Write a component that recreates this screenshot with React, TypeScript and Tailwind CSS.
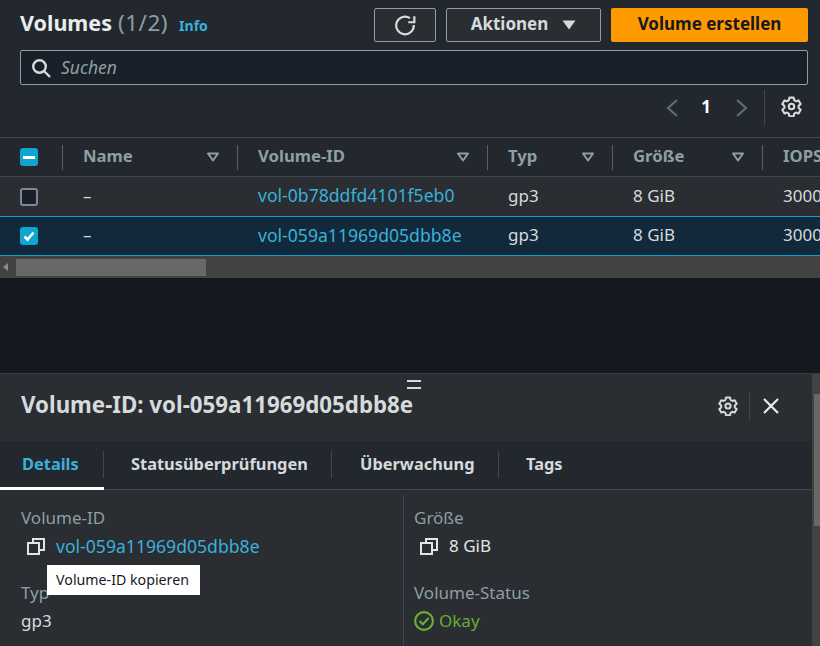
import React from "react";

function Gear({ size }: { size: number }) {
  return (
    <svg width={size} height={size} viewBox="0 0 20 20" fill="none" stroke="#d5dbdb" strokeWidth="2" strokeLinejoin="round" className="block shrink-0">
      <path d="M8 1.500h4l.6 2.500 1.700 1 2.400-.8 2 3.500-1.900 1.700v2l1.900 1.700-2 3.500-2.400-.8-1.700 1-.6 2.500H8l-.6-2.500-1.700-1-2.400.8-2-3.500 1.900-1.700v-2L1.300 7.700l2-3.500 2.400.8 1.700-1z" />
      <circle cx="10" cy="10" r="2.600" />
    </svg>
  );
}

function FilterCaret() {
  return (
    <svg width="14" height="12" viewBox="0 0 14 12" className="block">
      <path d="M2 2.500h10L7 9.500z" fill="none" stroke="#8d9fa3" strokeWidth="2" strokeLinejoin="round" />
    </svg>
  );
}

function Copy() {
  return (
    <svg width="18" height="18" viewBox="0 0 18 18" fill="none" stroke="#e1e5e5" strokeWidth="2" className="block">
      <rect x="1" y="6" width="11" height="11" />
      <path d="M6 5.500V2h11v11h-4" />
    </svg>
  );
}

function HeaderCell({ label, caret = true, last = false }: { label: string; caret?: boolean; last?: boolean }) {
  return (
    <div className={`flex items-center justify-between pl-[20px] ${last ? "" : "pr-[17px] border-r border-[#596067]"} h-[25px] whitespace-nowrap`}>
      <span className="text-[16.7px] font-bold text-[#8d9fa3] pb-[2px]">{label}</span>
      {caret && <FilterCaret />}
    </div>
  );
}

function Row({ id, selected }: { id: string; selected: boolean }) {
  return (
    <div
      className={`grid grid-cols-[63px_175px_250px_125px_150px_1fr] items-center text-[17px] whitespace-nowrap text-[#d5dbdb] ${
        selected ? "bg-[#12293c] border-y border-[#0f9fcf] h-[40px]" : "bg-[#2a2d32] h-[39px]"
      }`}
    >
      <div className="pl-[20px]">
        {selected ? (
          <div className="w-[18px] h-[18px] rounded-[3px] bg-[#0ea5d0] flex items-center justify-center">
            <svg width="14" height="14" viewBox="0 0 14 14" fill="none" stroke="#fff" strokeWidth="2.600">
              <path d="M2.500 7.500l3 3 6-7" />
            </svg>
          </div>
        ) : (
          <div className="w-[18px] h-[18px] rounded-[3px] bg-[#1a2029] border-2 border-[#7d8998]" />
        )}
      </div>
      <div className="pl-[20px] pb-[2px]">–</div>
      <div className="pl-[20px] pb-[2px] text-[17.6px] text-[#39b1d9]">{id}</div>
      <div className="pl-[20px] pb-[2px]">gp3</div>
      <div className="pl-[20px] pb-[2px]">8 GiB</div>
      <div className="pl-[20px] pb-[2px]">3000</div>
    </div>
  );
}

export default function App() {
  return (
    <div className="w-[820px] h-[646px] overflow-hidden flex flex-col bg-[#15181e] font-['Noto_Sans','Open_Sans',sans-serif]">
      {/* Top panel */}
      <div className="h-[137px] shrink-0 bg-[#23282f] px-[20px] pt-[8px] pr-[12px]">
        <div className="flex items-center h-[34px]">
          <div className="flex-1 flex items-baseline whitespace-nowrap pb-[4px]">
            <span className="text-[21.500px] font-bold text-[#eaeded]">Volumes</span>
            <span className="text-[22.500px] text-[#8d9fa3] ml-[6px] tracking-[0.5px]">(1/2)</span>
            <span className="text-[14px] font-bold text-[#39b1d9] ml-[11px]">Info</span>
          </div>
          <button className="w-[62px] h-[34px] rounded-[2px] border border-[#8d9fa3] bg-[#2a2d32] flex items-center justify-center">
            <svg width="22" height="22" viewBox="0 0 20 20" fill="none" stroke="#d5dbdb" strokeWidth="2">
              <path d="M14.500 3.800A8 8 0 1 0 18 10" />
              <path d="M13 7.500h5.500V2" />
            </svg>
          </button>
          <button className="ml-[10px] w-[155px] h-[34px] rounded-[2px] border border-[#8d9fa3] bg-[#2a2d32] flex items-center justify-center gap-[14px] text-[17px] font-bold text-[#d5dbdb]">
            <span className="pb-[2px]">Aktionen</span>
            <svg width="14" height="10" viewBox="0 0 14 10" className="block">
              <path d="M0.500 0.500h13L7 9.500z" fill="#d5dbdb" />
            </svg>
          </button>
          <button className="ml-[10px] w-[197px] h-[34px] pb-[2px] rounded-[2px] bg-[#ff9900] text-[17px] font-bold text-[#16191f]">
            Volume erstellen
          </button>
        </div>
        <div className="mt-[8px] h-[35px] rounded-[2px] border border-[#8d9fa3] bg-[#1a2029] flex items-center pl-[10px] gap-[10px]">
          <svg width="20" height="20" viewBox="0 0 20 20" fill="none" stroke="#d5dbdb" strokeWidth="2.400">
            <circle cx="8.500" cy="8.500" r="6.300" />
            <path d="M13 13l6 6" />
          </svg>
          <span className="text-[17.500px] italic text-[#8d9fa3] pb-[1px]">Suchen</span>
        </div>
        <div className="mt-[5px] flex items-center justify-end h-[35px] pr-[6px]">
          <svg width="14" height="20" viewBox="0 0 14 20" fill="none" stroke="#5f6b7a" strokeWidth="2.200">
            <path d="M12 2L3 10l9 8" />
          </svg>
          <span className="ml-[22px] text-[17px] font-bold text-white pb-[2px]">1</span>
          <svg width="14" height="20" viewBox="0 0 14 20" fill="none" stroke="#5f6b7a" strokeWidth="2.200" className="ml-[24px]">
            <path d="M2 2l9 8-9 8" />
          </svg>
          <div className="ml-[15px] h-[35px] border-l border-[#414750]" />
          <div className="ml-[16px] pb-[2px]"><Gear size={21} /></div>
        </div>
      </div>

      {/* Table */}
      <div className="shrink-0 bg-[#23282f] border-t border-[#414750] h-[40px] border-b grid grid-cols-[63px_175px_250px_125px_150px_1fr] items-center">
        <div className="pl-[20px] h-[25px] border-r border-[#596067] flex items-center">
          <div className="w-[18px] h-[18px] rounded-[3px] bg-[#0ea5d0] flex items-center justify-center">
            <div className="w-[12px] h-[3px] bg-white" />
          </div>
        </div>
        <HeaderCell label="Name" />
        <HeaderCell label="Volume-ID" />
        <HeaderCell label="Typ" />
        <HeaderCell label="Größe" />
        <HeaderCell label="IOPS" caret={false} last />
      </div>
      <Row id="vol-0b78ddfd4101f5eb0" selected={false} />
      <Row id="vol-059a11969d05dbb8e" selected />
      <div className="shrink-0 h-[22px] bg-[#424242] flex items-center">
        <svg width="16" height="12" viewBox="0 0 16 12" className="block shrink-0">
          <path d="M8 2v8L3 6z" fill="#8a8a8a" />
        </svg>
        <div className="w-[190px] h-[17px] bg-[#686868]" />
      </div>

      <div className="flex-1" />

      {/* Split panel */}
      <div className="relative shrink-0 h-[273px] bg-[#2a2d32] border-t border-[#353b43] flex">
        <div className="flex-1 flex flex-col min-w-0">
          <div className="relative h-[67px] shrink-0 flex items-center pl-[21px] pb-[3px]">
            <div className="absolute left-[407px] top-[6px] w-[14px] h-[9px] border-y-2 border-[#d5dbdb]" />
            <h2 className="flex-1 text-[22.300px] font-bold text-[#d5dbdb] whitespace-nowrap pb-[2px]">Volume-ID: vol-059a11969d05dbb8e</h2>
            <Gear size={20} />
            <div className="ml-[11px] h-[29px] border-l border-[#414750]" />
            <svg width="18" height="18" viewBox="0 0 18 18" fill="none" stroke="#eaeded" strokeWidth="2.200" className="ml-[12px] mr-[32px]">
              <path d="M2 2l14 14M16 2L2 16" />
            </svg>
          </div>
          <div className="h-[49px] shrink-0 bg-[#23282f] border-b border-[#414750] flex items-stretch text-[16.400px] font-bold text-[#d5dbdb]">
            <div className="w-[104px] border-b-[3px] border-white -mb-px flex items-center pl-[22px] text-[#39b1d9] relative">
              Details
              <div className="absolute right-0 top-[10px] h-[27px] border-r border-[#414750]" />
            </div>
            <div className="w-[228px] flex items-center pl-[27px] pb-[2px] relative">
              Statusüberprüfungen
              <div className="absolute right-0 top-[10px] h-[27px] border-r border-[#414750]" />
            </div>
            <div className="w-[167px] flex items-center pl-[28px] pb-[2px] relative">
              Überwachung
              <div className="absolute right-0 top-[10px] h-[27px] border-r border-[#414750]" />
            </div>
            <div className="flex items-center pl-[27px] pb-[2px]">Tags</div>
          </div>
          <div className="flex-1 pt-[5px] grid grid-cols-[404px_1fr] text-[17px]">
            <div className="relative border-r border-[#414750] pl-[21px] pt-[10px]">
              <div className="text-[#8d9fa3] leading-[26px]">Volume-ID</div>
              <div className="flex items-center h-[30px] pl-[6px] gap-[11px]">
                <Copy />
                <span className="text-[#39b1d9] text-[17.600px]">vol-059a11969d05dbb8e</span>
              </div>
              <div className="text-[#8d9fa3] leading-[26px] mt-[19px]">Typ</div>
              <div className="text-[#d5dbdb] leading-[30px]">gp3</div>
              <div className="absolute left-[47px] top-[70px] w-[153px] h-[30px] bg-white flex items-center justify-center pr-[2px] text-[14.200px] text-[#16191f] whitespace-nowrap">
                Volume-ID kopieren
              </div>
            </div>
            <div className="pl-[10px] pt-[10px]">
              <div className="text-[#8d9fa3] leading-[26px]">Größe</div>
              <div className="flex items-center h-[30px] pl-[6px] gap-[11px]">
                <Copy />
                <span className="text-[#e1e5e5]">8 GiB</span>
              </div>
              <div className="text-[#8d9fa3] leading-[26px] mt-[19px]">Volume-Status</div>
              <div className="flex items-center h-[30px] gap-[5px] text-[#69ae34]">
                <svg width="20" height="20" viewBox="0 0 20 20" fill="none" stroke="#69ae34" strokeWidth="2.200">
                  <circle cx="10" cy="10" r="8.900" />
                  <path d="M5.500 10l3.200 3.200 6-6.200" />
                </svg>
                <span>Okay</span>
              </div>
            </div>
          </div>
        </div>
        <div className="w-[8px] shrink-0 bg-[#424242] pt-[20px] pl-[2px]">
          <div className="h-[132px] bg-[#686868]" />
        </div>
      </div>
    </div>
  );
}
